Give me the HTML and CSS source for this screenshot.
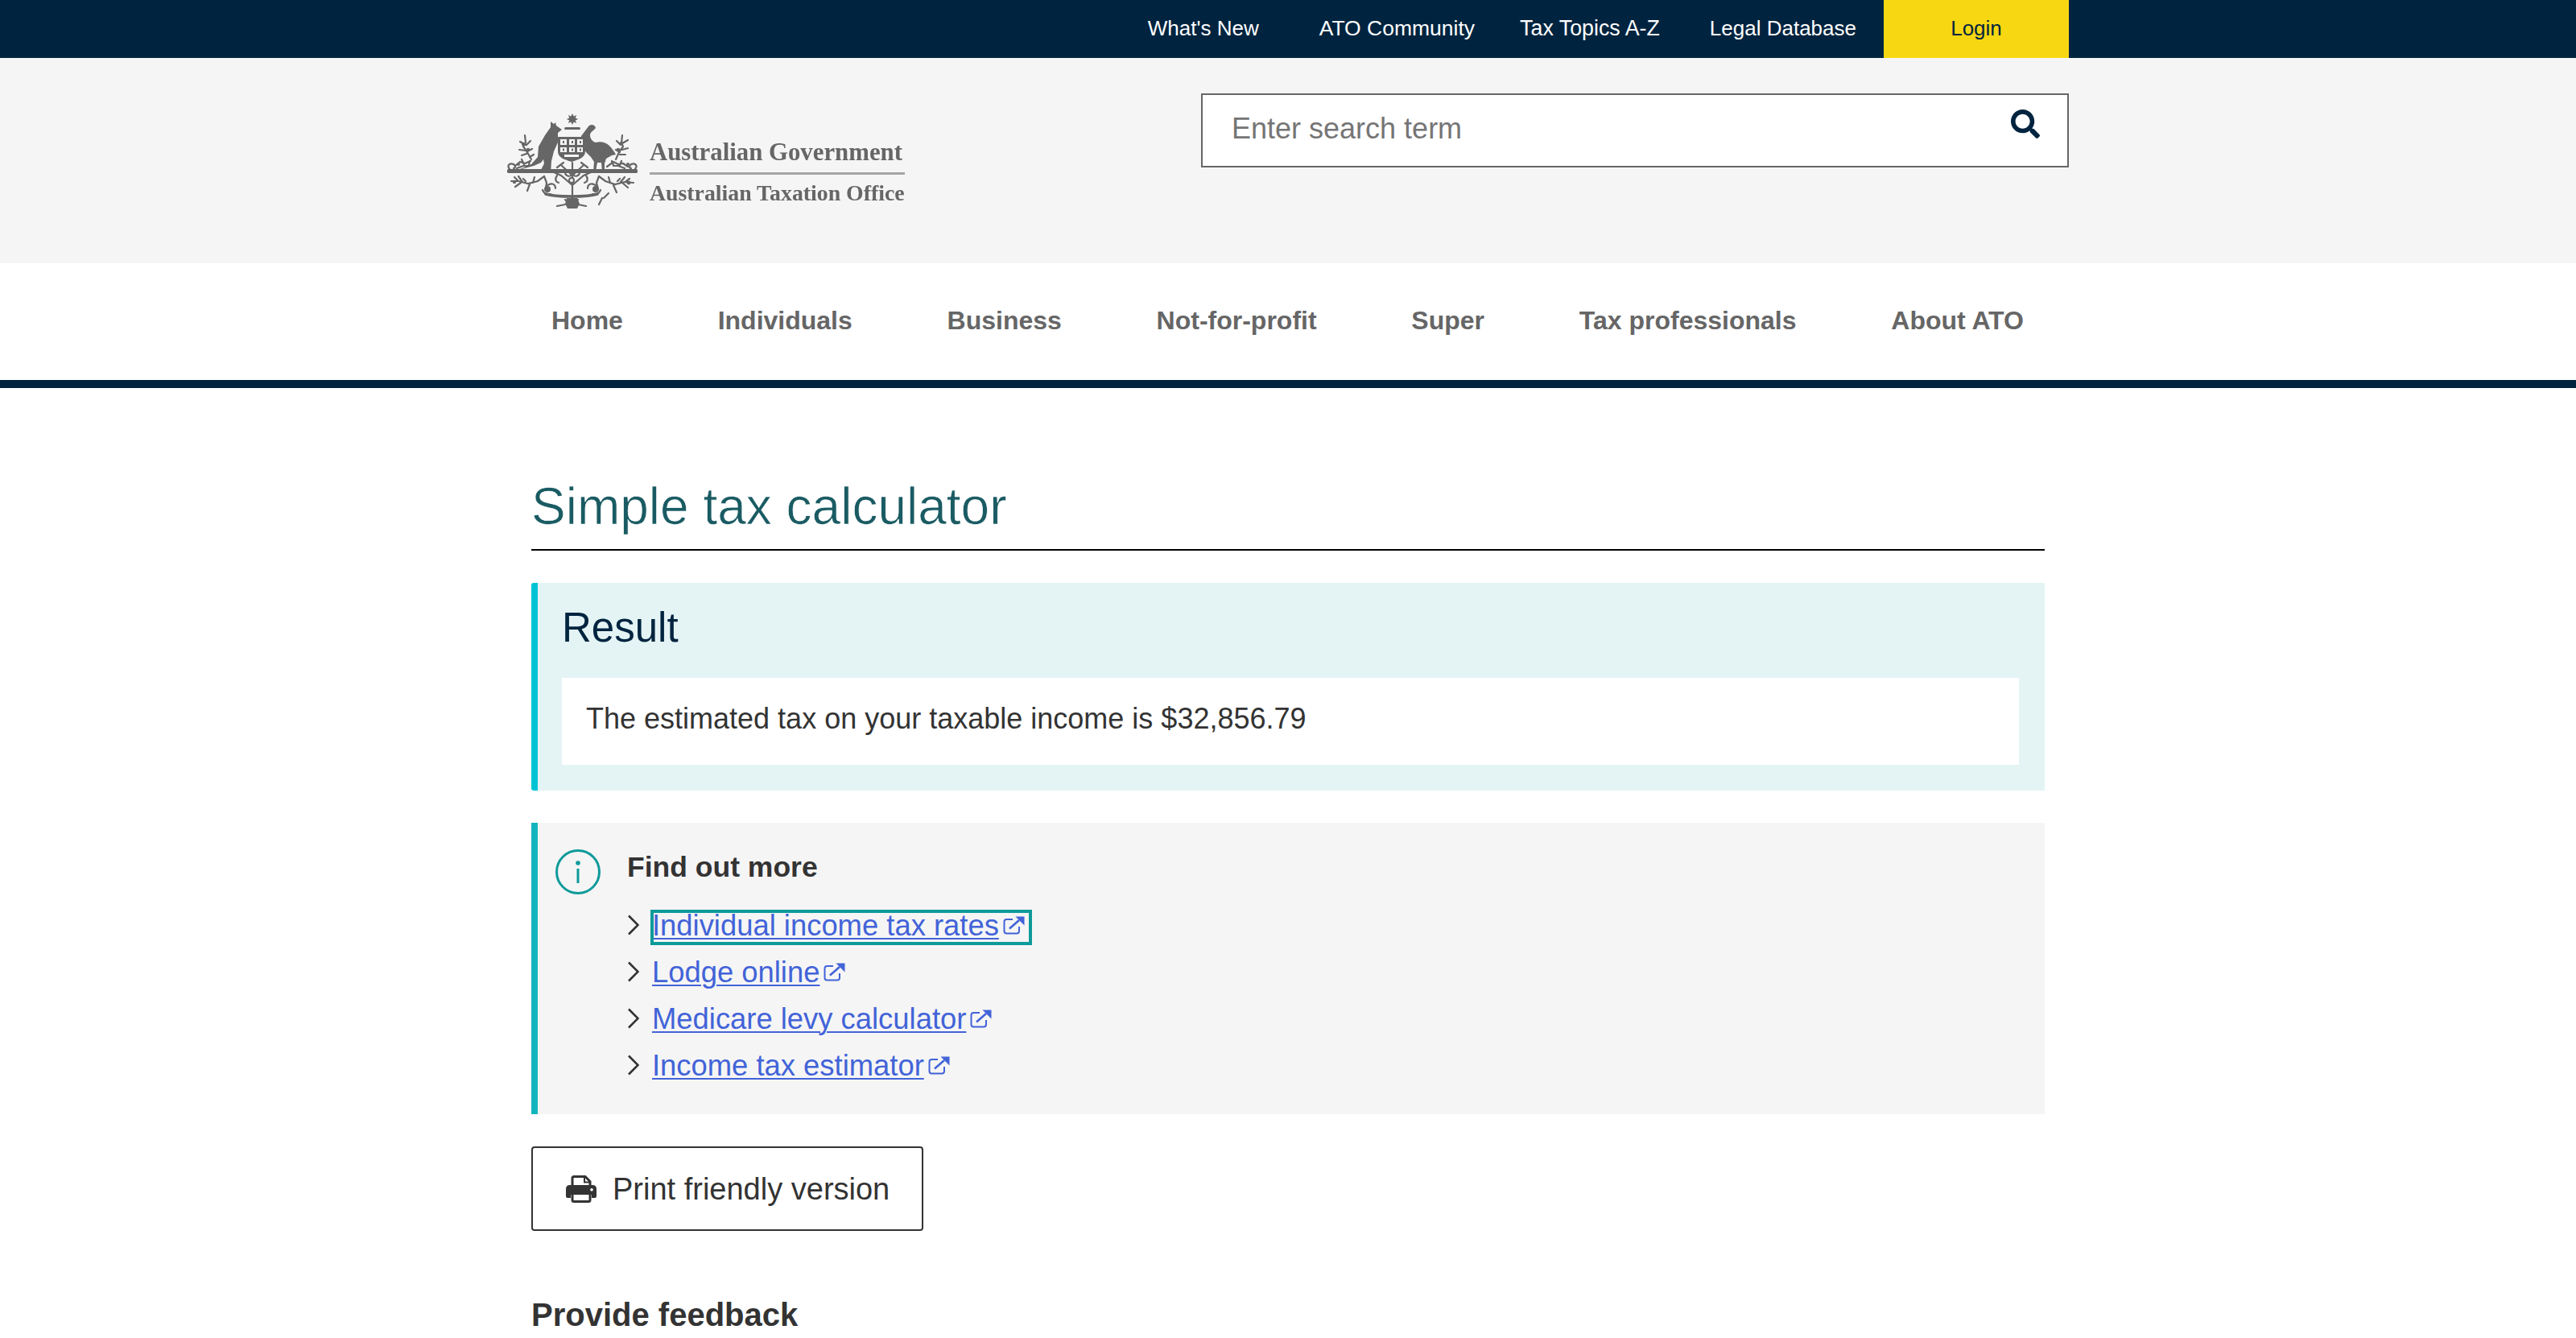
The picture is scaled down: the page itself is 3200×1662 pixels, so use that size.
FILE: index.html
```html
<!DOCTYPE html>
<html lang="en">
<head>
<meta charset="utf-8">
<title>Simple tax calculator</title>
<link rel="stylesheet" href="styles.css">
</head>
<body>
<svg class="defs" width="0" height="0" aria-hidden="true">
  <symbol id="ext" viewBox="0 0 27 23">
    <path d="M12 4H4.500Q1.500 4 1.500 7V18.500Q1.500 21.500 4.500 21.500H17Q20 21.500 20 18.500V13" fill="none" stroke="currentColor" stroke-width="2"/>
    <path d="M8 15.500L20 5" fill="none" stroke="currentColor" stroke-width="2.600"/>
    <path d="M15.500 0.500H26.500V11.500Z" fill="currentColor"/>
  </symbol>
  <symbol id="chev" viewBox="0 0 14 26">
    <path d="M1 1.500L12.500 13L1 24.500" fill="none" stroke="#333" stroke-width="2.600"/>
  </symbol>
</svg>

<div class="topbar">
  <nav class="wrap topnav">
    <a class="toplink l1" href="#">What's New</a>
    <a class="toplink l2" href="#">ATO Community</a>
    <a class="toplink l3" href="#">Tax Topics A-Z</a>
    <a class="toplink l4" href="#">Legal Database</a>
    <a class="login" href="#">Login</a>
  </nav>
</div>

<header class="masthead">
  <div class="wrap masthead-in">
    <a class="logo" href="#">
      <svg class="crest" viewBox="0 0 162 120" width="162" height="120" aria-hidden="true">
        <g fill="#666">
          <path d="M81 1l1.700 3.500 3.500-1.500-1.500 3.500 3.500 1.500-3.500 1.500 1.500 3.500-3.500-1.500-1.700 3.500-1.700-3.500-3.500 1.500 1.500-3.500-3.500-1.500 3.500-1.500-1.500-3.500 3.500 1.500z"/>
          <rect x="71" y="18" width="20" height="3" rx="1.500"/>
          <path d="M54 11l4 3 2-2 1 4 7 5-5 4 0 12-5 11-3 12-1 15h-14l6-12-1-5-3 4-9 4-15 4h-2l14-6 8-9 1-13 8-14 7-10z"/>
          <path d="M101 17c2-3 8-3 9 2l-3 3c-3 2-4 4-4 6 0 4 3 8 7 9 6-2 13 0 17 4 3 3 6 7 8 11l-5 1-7 4-2 6 0 10h-3l-1-11-5 0-2 11h-3l1-12-4-6-6-6-5-8-1-12z"/>
          <path d="M2 70h158c3 0 3 5 0 5H2c-3 0-3-5 0-5z"/>
          <path d="M63 30h34v18c0 8-8 10-17 13-9-3-17-5-17-13z"/>
        </g>
        <g fill="#f5f5f5">
          <rect x="66" y="33" width="8" height="7"/><rect x="77" y="33" width="7" height="7"/><rect x="87" y="33" width="7" height="7"/>
          <rect x="66" y="43" width="8" height="6"/><rect x="77" y="43" width="7" height="6"/><rect x="87" y="43" width="7" height="6"/>
          <rect x="71" y="52" width="18" height="3"/>
        </g>
        <g fill="#666">
          <rect x="69" y="35" width="2" height="3"/><rect x="80" y="35" width="2" height="3"/><rect x="90" y="35" width="2" height="3"/>
          <rect x="69" y="44.500" width="2" height="3"/><rect x="80" y="44.500" width="2" height="3"/><rect x="90" y="44.500" width="2" height="3"/>
        </g>
        <g fill="none" stroke="#666" stroke-width="2.200" stroke-linecap="round">
          <path d="M3 70c-4-5 1-8 5-6 3 2 2 5 0 5M159 70c4-5-1-8-5-6-3 2-2 5 0 5"/>
          <path d="M22 28l1 9-3 5 5 7 5 9M16 36l7 4M29 35l-5 5M15 46l8 1M31 45l-6 3M18 53l6-2M33 52l-5 3"/>
          <path d="M143 28l-1 9 2 5-5 7-4 9M150 34l-7 4M136 35l5 5M150 44l-7 2M135 46l5 3M147 52l-7 0"/>
          <path d="M10 66l6-5 6 2 7-3M12 69l8-3 8 0M18 58l3 6M28 60l-1 5"/>
          <path d="M150 67l-6-4-6 1-6-3 -8 6M146 69l-8-3-6 0M142 60l-2 5M130 60l2 5"/>
          <path d="M81 62v46M81 78l-13-12M81 78l13-12M81 90l-14-12-9-4M81 90l14-12 9-4M70 62l-8 6M92 62l8 6"/>
          <path d="M5 85l9 0 12 3 12-3 8-6M10 92l7-5M14 79l5 7M28 89l-3 8M34 80l-2 7M20 82l3 3M9 80l4 4M46 79l3 8-1 8"/>
          <path d="M157 87l-11-1-12 3-12-4-8-6M150 93l-7-6M146 80l-5 6M132 90l4 9M126 80l2 7M140 82l-3 3M152 82l-4 3M114 79l-3 8 2 8"/>
          <path d="M48 92c6-6 12-4 12 2M112 92c-6-6-12-4-12 2M62 78c-3 4-2 8 2 9M98 78c3 4 2 8-2 9M72 74c0 5 6 6 8 3M90 74c0 5-6 6-8 3"/>
          <path d="M48 101c12 4 52 4 64 0" stroke-width="3.500"/>
          <path d="M44 96c2 5 6 6 10 5M116 96c-2 5-6 6-10 5"/>
          <path d="M62 116l10-2M98 116l-10-2M72 108l4 4M88 108l-4 4M118 106l-4 8M126 100l-6 6"/>
        </g>
        <g fill="#666">
          <circle cx="80" cy="84" r="3" fill="#f5f5f5" stroke="#666" stroke-width="2"/>
          <circle cx="50" cy="95" r="4"/><circle cx="110" cy="95" r="4"/>
          <path d="M74 106h13l3 7-3 6h-12l-3-6z"/>
          <circle cx="14" cy="64" r="2"/><circle cx="150" cy="64" r="2"/>
          <circle cx="20" cy="39" r="2.200"/><circle cx="26" cy="46" r="2.200"/><circle cx="142" cy="38" r="2.200"/><circle cx="138" cy="46" r="2.200"/>
          <circle cx="9" cy="86" r="2.200"/><circle cx="151" cy="87" r="2.400"/>
        </g>
      </svg>
      <span class="wordmark">
        <span class="wm-gov">Australian Government</span>
        <span class="wm-ato">Australian Taxation Office</span>
      </span>
    </a>
    <form class="search">
      <input class="search-input" type="text" placeholder="Enter search term">
      <svg class="search-icon" viewBox="0 0 512 512" width="36" height="36" aria-hidden="true"><path fill="#00243f" d="M505 442.700L405.300 343c-4.500-4.500-10.600-7-17-7H372c27.600-35.300 44-79.700 44-128C416 93.100 322.900 0 208 0S0 93.100 0 208s93.100 208 208 208c48.300 0 92.700-16.400 128-44v16.300c0 6.400 2.500 12.500 7 17l99.700 99.700c9.400 9.400 24.600 9.400 33.900 0l28.300-28.300c9.400-9.400 9.400-24.600.1-34zM208 336c-70.700 0-128-57.200-128-128 0-70.700 57.200-128 128-128 70.700 0 128 57.200 128 128 0 70.700-57.200 128-128 128z"/></svg>
    </form>
  </div>
</header>

<nav class="mainnav">
  <div class="wrap mainnav-in">
    <a href="#">Home</a>
    <a href="#">Individuals</a>
    <a href="#">Business</a>
    <a href="#">Not-for-profit</a>
    <a href="#">Super</a>
    <a href="#">Tax professionals</a>
    <a href="#">About ATO</a>
  </div>
</nav>

<main class="content">
  <h1 class="title">Simple tax calculator</h1>

  <section class="result">
    <h2 class="result-h">Result</h2>
    <p class="result-text">The estimated tax on your taxable income is $32,856.79</p>
  </section>

  <section class="more">
    <svg class="info" viewBox="0 0 56 56" width="56" height="56" aria-hidden="true">
      <circle cx="28" cy="28" r="26.500" fill="none" stroke="#0e9a9a" stroke-width="3"/>
      <circle cx="28" cy="17" r="2.800" fill="#0e9a9a"/>
      <rect x="26.500" y="24" width="3" height="18" fill="#0e9a9a"/>
    </svg>
    <div class="more-body">
      <h3 class="more-h">Find out more</h3>
      <ul class="links">
        <li><svg class="chev"><use href="#chev"/></svg><a class="link focus" href="#">Individual income tax rates<svg class="ext"><use href="#ext"/></svg></a></li>
        <li><svg class="chev"><use href="#chev"/></svg><a class="link" href="#">Lodge online<svg class="ext"><use href="#ext"/></svg></a></li>
        <li><svg class="chev"><use href="#chev"/></svg><a class="link" href="#">Medicare levy calculator<svg class="ext"><use href="#ext"/></svg></a></li>
        <li><svg class="chev"><use href="#chev"/></svg><a class="link" href="#">Income tax estimator<svg class="ext"><use href="#ext"/></svg></a></li>
      </ul>
    </div>
  </section>

  <button class="print" type="button">
    <svg class="print-icon" viewBox="0 0 38 34" width="38" height="34" aria-hidden="true">
      <path d="M8 13V3.500Q8 1.500 10 1.500H24L30 7.500V13" fill="none" stroke="#333" stroke-width="3"/>
      <path d="M23 1.500V8.500H30" fill="none" stroke="#333" stroke-width="2"/>
      <path fill-rule="evenodd" fill="#333" d="M5 12H33Q38 12 38 17V26Q38 28 36 28H32V24H6V28H2Q0 28 0 26V17Q0 12 5 12ZM32 16a1.800 1.800 0 1 0 .01 0Z"/>
      <path d="M8 24V30.500Q8 32.500 10 32.500H28Q30 32.500 30 30.500V24" fill="none" stroke="#333" stroke-width="3"/>
    </svg>
    <span>Print friendly version</span>
  </button>

  <h2 class="feedback">Provide feedback</h2>
</main>
</body>
</html>
```

FILE: styles.css
```css
* { box-sizing: border-box; }
html, body { margin: 0; padding: 0; }
body { font-family: "Liberation Sans", Arial, sans-serif; color: #333; background: #fff; overflow: hidden; height: 1662px; }
a { text-decoration: none; color: inherit; }
.defs { position: absolute; }
.wrap { width: 1940px; margin: 0 auto; }

.topbar { background: #00243f; height: 72px; }
.topnav { display: flex; justify-content: flex-end; height: 72px; align-items: stretch; }
.toplink { color: #fff; font-size: 26px; line-height: 70px; }
.l1 { margin-right: 75px; }
.l2 { margin-right: 56px; font-size: 26.500px; }
.l3 { margin-right: 62px; font-size: 26.800px; }
.l4 { margin-right: 34px; }
.login { background: #f7d711; color: #00243f; width: 230px; text-align: center; font-size: 26px; line-height: 70px; }

.masthead { background: #f5f5f5; height: 255px; }
.masthead-in { display: flex; justify-content: space-between; align-items: flex-start; }
.logo { display: flex; margin-top: 68px; filter: blur(0.6px); }
.crest { display: block; flex: none; }
.wordmark { display: flex; flex-direction: column; margin-left: 15px; width: 317px; font-family: "Liberation Serif", serif; font-weight: 700; color: #666; white-space: nowrap; }
.wm-gov { font-size: 30.800px; line-height: 38px; height: 77px; padding-top: 30px; border-bottom: 3px solid #a5a5a5; }
.wm-ato { font-size: 27.800px; line-height: 38px; padding-top: 4px; }

.search { margin-top: 44px; width: 1078px; height: 92px; border: 2px solid #666; background: #fff; display: flex; align-items: flex-start; justify-content: space-between; }
.search-input { flex: 1; border: 0; outline: 0; background: transparent; font: 36px "Liberation Sans", Arial, sans-serif; padding: 0 0 0 36px; height: 84px; color: #333; }
.search-input::placeholder { color: #757575; opacity: 1; }
.search-icon { margin: 18px 34px 0 0; flex: none; }

.mainnav { border-bottom: 10px solid #00243f; height: 155px; background: #fff; }
.mainnav-in { display: flex; justify-content: space-between; padding: 0 56px 4px 55px; height: 145px; align-items: center; }
.mainnav-in a { font-size: 32px; font-weight: 700; color: #666; line-height: 40px; }

.content { width: 1880px; margin: 0 auto; }
.title { margin: 0; height: 202px; padding-top: 109px; border-bottom: 2px solid #000; font-size: 64px; line-height: 76px; font-weight: 400; color: #1a5b63; -webkit-text-stroke: 0.7px #fff; }

.result { margin-top: 40px; height: 258px; background: #e4f4f5; border-left: 8px solid #00c4d4; border-radius: 3px 0 0 3px; padding: 26px 32px 0 30px; }
.result-h { margin: 0; font-size: 51px; line-height: 60px; font-weight: 400; color: #00243f; }
.result-text { margin: 32px 0 0; height: 108px; background: #fff; padding: 0 30px; font-size: 36px; line-height: 102px; color: #333; }

.more { margin-top: 40px; height: 362px; background: #f5f5f5; border-left: 8px solid #12b5bd; display: flex; padding: 33px 0 0 22px; }
.info { flex: none; }
.more-body { margin-left: 33px; }
.more-h { margin: 0; font-size: 35.500px; line-height: 44px; font-weight: 700; color: #333; }
.links { list-style: none; margin: 24px 0 0 1px; padding: 0; }
.links li { height: 58px; display: flex; align-items: center; font-size: 36.400px; color: #4263d8; }
.link { display: flex; align-items: flex-start; height: 40px; padding: 2px 7px 0 0; margin-left: 16px; line-height: 32px; white-space: nowrap; text-decoration: underline; text-decoration-thickness: 2px; text-underline-offset: 3px; }
.focus { outline: 4px solid #0e9a9a; outline-offset: -2px; }
.chev { width: 14px; height: 26px; flex: none; margin-top: -6px; }
.ext { width: 27px; height: 23px; margin: 4px 0 0 5px; flex: none; color: #4263d8; }

.print { margin-top: 40px; width: 487px; height: 105px; border: 2px solid #333; border-radius: 4px; background: #fff; display: flex; align-items: center; padding: 2px 0 0 41px; font: 38px "Liberation Sans", Arial, sans-serif; color: #333; }
.print-icon { flex: none; margin: -2px 20px 0 0; }

.feedback { margin: 81px 0 0; font-size: 40px; line-height: 46px; font-weight: 700; color: #333; }
```
